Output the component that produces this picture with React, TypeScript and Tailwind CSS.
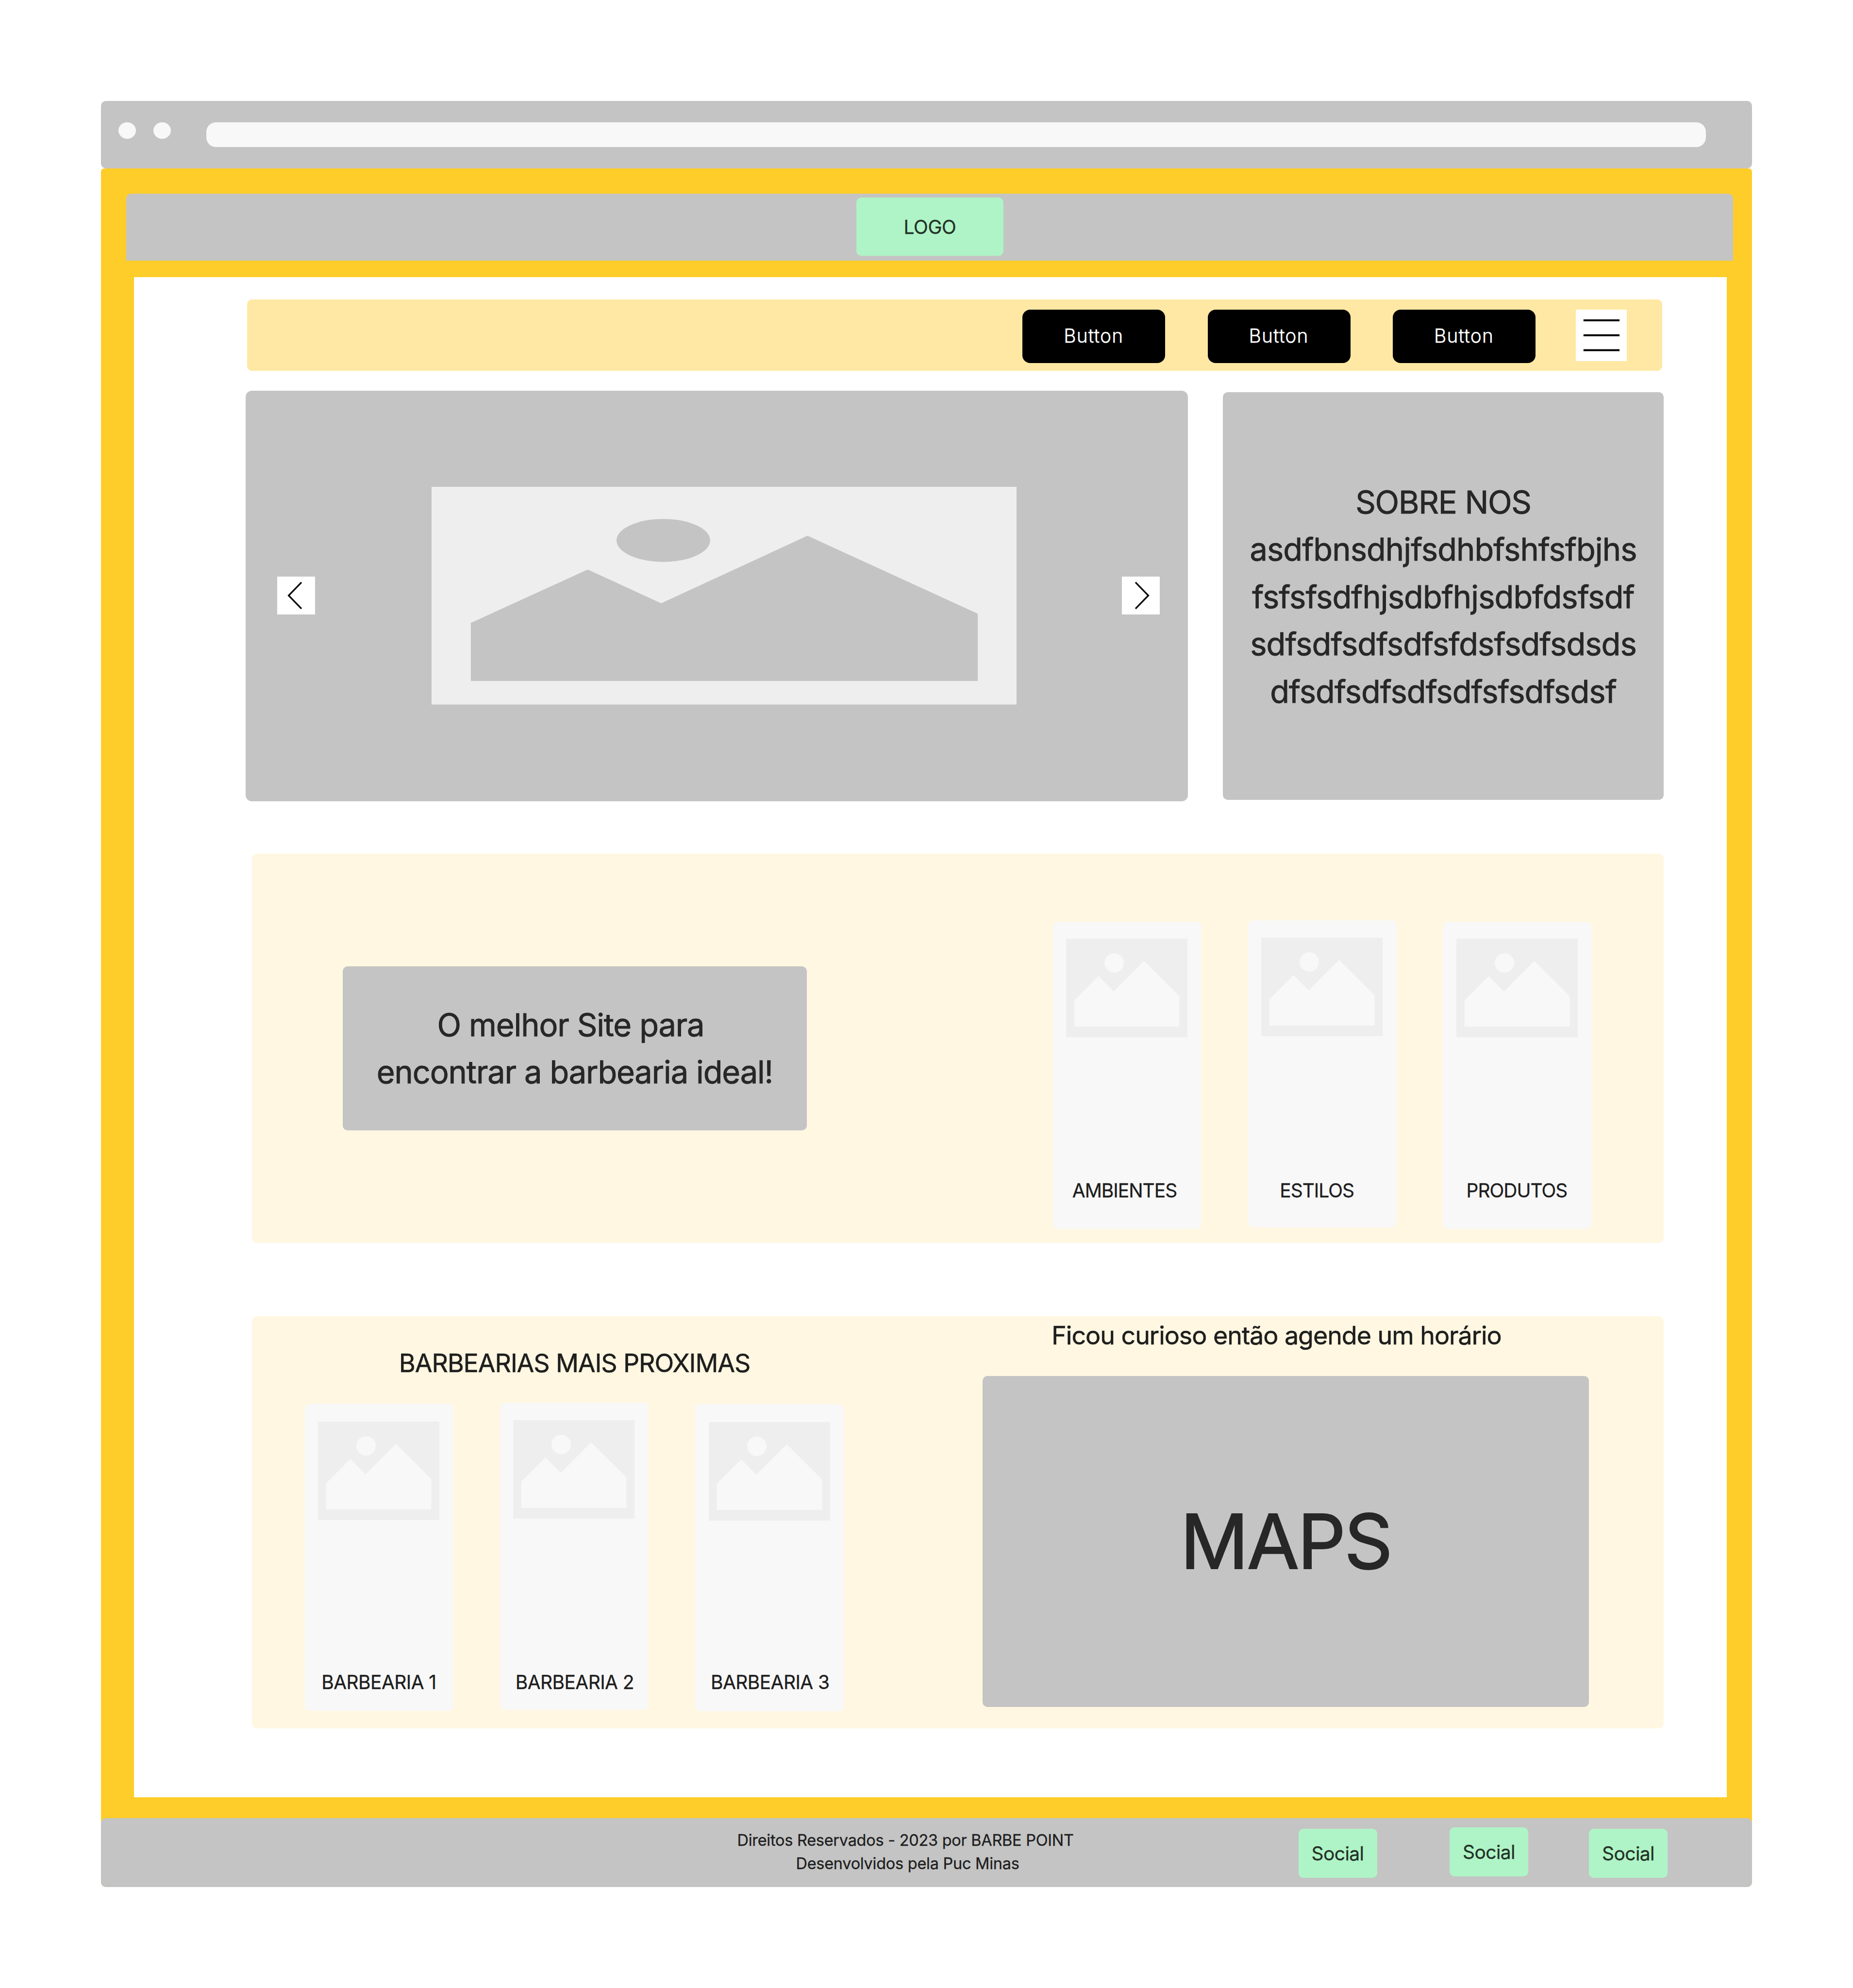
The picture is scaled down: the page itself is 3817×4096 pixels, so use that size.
import type { ReactNode } from "react";

type PictureProps = { className: string; frame: string; shape: string };

// Image placeholder: a sun above two peaks, stretched to its box.
function Picture({ className, frame, shape }: PictureProps) {
  return (
    <svg className={className} viewBox="0 0 1000 1000" preserveAspectRatio="none" aria-hidden="true">
      <rect width="1000" height="1000" fill={frame} />
      <ellipse cx="396.2" cy="246.2" rx="80" ry="98.7" fill={shape} />
      <path
        d="M67.1 625.2 L266.9 379.8 L392.5 534.8 L642.6 224.8 L933.7 582.8 V891.5 H67.1 Z"
        fill={shape}
      />
    </svg>
  );
}

function Card({ className, label, labelClass }: { className: string; label: string; labelClass: string }) {
  return (
    <div className={`flex h-[633px] w-[306px] shrink-0 flex-col rounded-[10px] bg-[#f8f8f8] ${className}`}>
      <Picture className="ml-[27.3px] block h-[203px] w-[250px]" frame="#eeeeee" shape="#f8f8f8" />
      <div className={`text-center text-[38.95px] leading-[48px] whitespace-nowrap text-[#1e1e1e] ${labelClass}`}>
        {label}
      </div>
    </div>
  );
}

function NavButton() {
  return (
    <button className="flex h-[110px] w-[294px] items-center justify-center rounded-[16px] bg-black pr-[1px] pb-[2px] text-[38.95px] leading-none font-light tracking-[0.029em] text-white [-webkit-text-stroke:0.012em]">
      Button
    </button>
  );
}

function Arrow({ className, points }: { className: string; points: string }) {
  return (
    <button className={`mb-[2px] size-[78px] shrink-0 bg-white ${className}`}>
      <svg className="block size-full" viewBox="0 0 96 96" fill="none" stroke="#000" strokeWidth="4">
        <polyline points={points} />
      </svg>
    </button>
  );
}

function Social({ className }: { className: string }) {
  return (
    <button
      className={`flex h-[101px] w-[162px] items-center justify-center rounded-[10px] bg-[#aff4c6] pt-[1px] text-[38.95px] leading-none tracking-[-0.0145em] text-[#233128] ${className}`}
    >
      Social
    </button>
  );
}

function Section({ className, children }: { className: string; children: ReactNode }) {
  return <section className={`ml-[13px] flex w-[2908px] rounded-[10px] bg-[#fff7e1] ${className}`}>{children}</section>;
}

export default function App() {
  return (
    <div className="h-[4096px] w-[3817px] overflow-hidden bg-white pt-[208px] pl-[208px] font-['Inter',sans-serif] [-webkit-text-stroke:0.35px]">
      <div className="w-[3401px]">
        <div className="flex h-[139px] items-start rounded-[10px] bg-[#c4c4c4] pt-[44px] pl-[36px]">
          <div className="h-[34px] w-[36px] rounded-[50%] bg-[#f8f8f8]" />
          <div className="ml-[36px] h-[34px] w-[36px] rounded-[50%] bg-[#f8f8f8]" />
          <div className="ml-[73px] h-[51px] w-[3089px] rounded-[20px] bg-[#f8f8f8]" />
        </div>

        <div className="rounded-t-[7px] rounded-b-[10px] bg-[#ffcd29] pt-[52px]">
          <header className="ml-[52px] flex h-[138px] w-[3310px] items-start rounded-t-[10px] bg-[#c4c4c4] pt-[8px] pl-[1504px]">
            <div className="flex h-[120px] w-[303px] items-center justify-center rounded-[10px] bg-[#aff4c6] pt-[2px] text-[38.95px] leading-none tracking-[-0.011em] text-[#233128]">
              LOGO
            </div>
          </header>

          <main className="mt-[34px] ml-[68px] h-[3132px] w-[3281px] bg-white pt-[46px] pl-[230px]">
            <nav className="ml-[3px] flex h-[147px] w-[2915px] items-start justify-end rounded-[10px] bg-[#ffe8a3] pt-[21px] pr-[73px]">
              <div className="flex gap-[87.4px]">
                <NavButton />
                <NavButton />
                <NavButton />
              </div>
              <button className="ml-[82.5px] size-[105.5px] bg-white">
                <svg className="block size-full" viewBox="0 0 130 130" stroke="#000" strokeWidth="5">
                  <path d="M19.5 27 H111 M19.5 65 H111 M19.5 103 H111" />
                </svg>
              </button>
            </nav>

            <div className="mt-[41px] flex items-center">
              <section className="flex h-[846px] w-[1941px] items-center rounded-[13px] bg-[#c4c4c4] pl-[65px]">
                <Arrow className="" points="61.5,14.5 29,48 61.5,81.5" />
                <Picture className="mb-[1px] ml-[239.5px] block h-[448.6px] w-[1205px]" frame="#eeeeee" shape="#c4c4c4" />
                <Arrow className="ml-[217.5px]" points="34.5,14.5 67,48 34.5,81.5" />
              </section>
              <section className="ml-[72px] flex h-[840px] w-[908px] flex-col items-center justify-center rounded-[10px] bg-[#c4c4c4] pt-[3px] text-[64.9px] leading-[97.4px] tracking-[-0.0137em] whitespace-nowrap text-[#272727] [-webkit-text-stroke:0.014em]">
                <h2 className="tracking-[-0.0195em]">SOBRE NOS</h2>
                <p>asdfbnsdhjfsdhbfshfsfbjhs</p>
                <p>fsfsfsdfhjsdbfhjsdbfdsfsdf</p>
                <p>sdfsdfsdfsdfsfdsfsdfsdsds</p>
                <p>dfsdfsdfsdfsdfsfsdfsdsf</p>
              </section>
            </div>

            <Section className="mt-[108px] h-[802px] items-start">
              <div className="mt-[232px] ml-[187px] flex h-[338px] w-[956px] flex-col items-center justify-center rounded-[10px] bg-[#c4c4c4] text-[64.9px] leading-[97.4px] tracking-[-0.0171em] whitespace-pre text-[#272727] [-webkit-text-stroke:0.014em]">
                <p>{"O melhor Site para "}</p>
                <p>encontrar a barbearia ideal!</p>
              </div>
              <div className="ml-[506.5px] flex gap-[96.2px]">
                <Card className="mt-[140px] pt-[35.3px]" label="AMBIENTES" labelClass="mt-[291.5px] pr-[10px] tracking-[-0.025em]" />
                <Card className="mt-[136.5px] pt-[36px]" label="ESTILOS" labelClass="mt-[294.5px] pr-[22px] tracking-[-0.025em]" />
                <Card className="mt-[140px] pt-[35.3px]" label="PRODUTOS" labelClass="mt-[291.5px] pr-[3px] tracking-[-0.025em]" />
              </div>
            </Section>

            <Section className="mt-[151px] h-[849px] items-start">
              <div className="mt-[57px] ml-[108.5px] w-[1112px]">
                <h2 className="pt-px text-center text-[51.93px] leading-[78px] tracking-[-0.0213em] text-[#1e1e1e] [-webkit-text-stroke:0.012em]">
                  BARBEARIAS MAIS PROXIMAS
                </h2>
                <div className="flex gap-[96.4px]">
                  <Card className="mt-[44px] pt-[36.5px]" label="BARBEARIA 1" labelClass="mt-[310.5px] tracking-[-0.0139em]" />
                  <Card className="mt-[41.5px] pt-[36.5px]" label="BARBEARIA 2" labelClass="mt-[313px] pl-[2px] tracking-[-0.0139em]" />
                  <Card className="mt-[45px] pt-[36.5px]" label="BARBEARIA 3" labelClass="mt-[309.5px] pl-[2px] tracking-[-0.0139em]" />
                </div>
              </div>
              <div className="ml-[284.5px] w-[1249px]">
                <h2 className="pt-px pr-[38px] text-center text-[51.93px] leading-[78px] tracking-[-0.0195em] whitespace-nowrap text-[#1e1e1e] [-webkit-text-stroke:0.012em]">
                  Ficou curioso então agende um horário
                </h2>
                <div className="mt-[44.3px] flex h-[682px] items-center justify-center rounded-[10px] bg-[#c4c4c4] text-[155.8px] leading-none tracking-[-0.021em] text-[#272727] [-webkit-text-stroke:0.014em]">
                  MAPS
                </div>
              </div>
            </Section>
          </main>

          <footer className="mt-[43px] flex h-[142px] items-start rounded-[10px] bg-[#c4c4c4]">
            <div className="mt-[21.5px] ml-[1261.5px] w-[800px] text-center text-[32.46px] leading-[48.7px] tracking-[-0.0078em] whitespace-pre text-[#1e1e1e]">
              <p>{"Direitos Reservados - 2023 por BARBE POINT "}</p>
              <p>Desenvolvidos pela Puc Minas</p>
            </div>
            <Social className="mt-[22px] ml-[405px]" />
            <Social className="mt-[19px] ml-[149.5px]" />
            <Social className="mt-[22px] ml-[125px]" />
          </footer>
        </div>
      </div>
    </div>
  );
}
